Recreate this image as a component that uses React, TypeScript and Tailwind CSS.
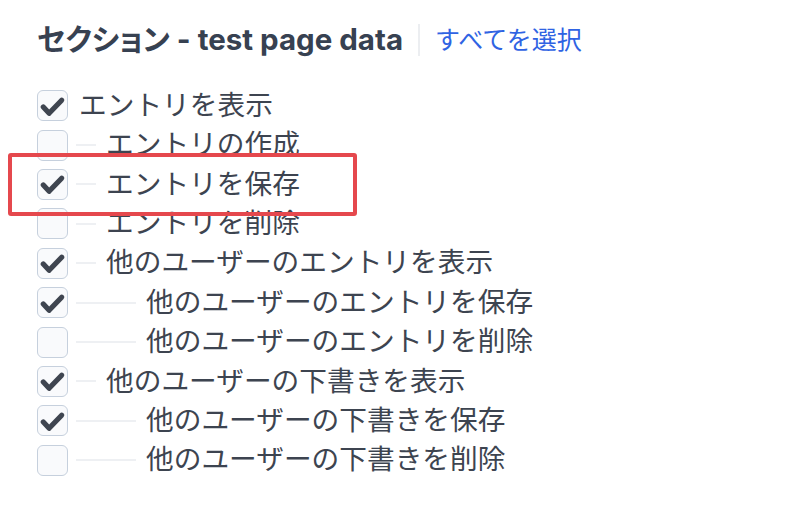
import React from 'react';

type Perm = { label: string; depth: number; checked: boolean };

const perms: Perm[] = [
  { label: 'エントリを表示', depth: 0, checked: true },
  { label: 'エントリの作成', depth: 1, checked: false },
  { label: 'エントリを保存', depth: 1, checked: true },
  { label: 'エントリを削除', depth: 1, checked: false },
  { label: '他のユーザーのエントリを表示', depth: 1, checked: true },
  { label: '他のユーザーのエントリを保存', depth: 2, checked: true },
  { label: '他のユーザーのエントリを削除', depth: 2, checked: false },
  { label: '他のユーザーの下書きを表示', depth: 1, checked: true },
  { label: '他のユーザーの下書きを保存', depth: 2, checked: true },
  { label: '他のユーザーの下書きを削除', depth: 2, checked: false },
];

function Checkbox({ checked }: { checked: boolean }) {
  return (
    <div className="w-[31px] h-[31px] shrink-0 rounded-[6px] border-[1.5px] border-[#c6d0dd] bg-[#f9fafc] flex items-center justify-center">
      {checked && (
        <svg viewBox="0 0 30 30" className="w-[30px] h-[30px]">
          <path d="M5.5 16 L11.5 22.5 L24.5 9" fill="none" stroke="#3f4550" strokeWidth="5.4" strokeLinecap="round" strokeLinejoin="round" />
        </svg>
      )}
    </div>
  );
}

function Row({ perm }: { perm: Perm }) {
  return (
    <div className="h-[39.4px] flex items-center">
      <Checkbox checked={perm.checked} />
      {perm.depth === 0 ? (
        <span className="ml-[11px] text-[27.7px] leading-none text-[#3d4450]">{perm.label}</span>
      ) : (
        <>
          <div className={`ml-[8px] h-[2px] bg-[#eef0f3] ${perm.depth === 1 ? 'w-[20px]' : 'w-[60px]'}`} />
          <span className="ml-[10px] text-[27.7px] leading-none text-[#3d4450]">{perm.label}</span>
        </>
      )}
    </div>
  );
}

export default function App() {
  return (
    <div
      className="relative w-[800px] h-[510px] bg-white"
      style={{ fontFamily: 'Inter, "Noto Sans CJK JP", sans-serif' }}
    >
      <div className="pl-[37px] pt-[24px]">
        <div className="flex items-center h-[32px]">
          <h2 className="text-[29.5px] font-bold text-[#374151] leading-none [font-feature-settings:'palt']">
            セクション - test page data
          </h2>
          <div className="ml-[15px] w-[2px] h-[32px] bg-[#eceef1]" />
          <a className="ml-[15px] text-[25px] leading-none text-[#2f63e3]">すべてを選択</a>
        </div>
        <div className="mt-[30px]">
          {perms.map((p) => (
            <Row key={p.label} perm={p} />
          ))}
        </div>
      </div>
      <div className="absolute left-[8px] top-[153px] w-[349px] h-[63px] border-[4.5px] border-[#e5484d] rounded-[3px]" />
    </div>
  );
}
